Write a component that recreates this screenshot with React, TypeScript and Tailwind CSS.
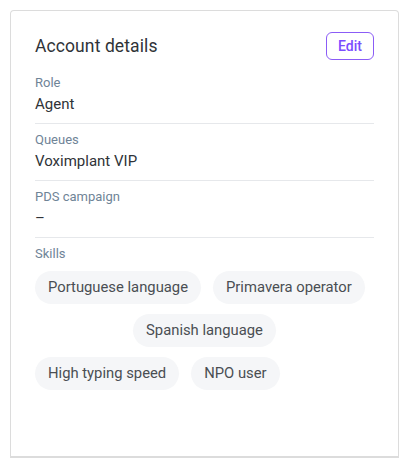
import React from 'react';

const fields = [
  { label: 'Role', value: 'Agent' },
  { label: 'Queues', value: 'Voximplant VIP' },
  { label: 'PDS campaign', value: '–' },
];

const Chip: React.FC<{ text: string }> = ({ text }) => (
  <span className="inline-flex h-[33px] items-center rounded-full bg-[#f5f6f8] px-[13px] text-[14.8px] text-[#4a4e53]">
    {text}
  </span>
);

const App: React.FC = () => {
  return (
    <div className="h-[459px] w-[409px] bg-white pl-[10px] pt-[10px]" style={{ fontFamily: 'Roboto, sans-serif' }}>
      <div className="h-[448px] w-[389px] rounded-t-[4px] border border-b-2 border-[#dcdcdc] bg-white px-6 pt-[21px]">
        <div className="flex items-center justify-between">
          <h2 className="text-[17.5px] font-normal tracking-[0.1px] text-[#2f3338]">Account details</h2>
          <button className="h-[28px] rounded-[6px] border border-[#8b5cf6] px-[11px] text-[14px] font-medium text-[#7c4dff]">
            Edit
          </button>
        </div>

        <div className="mt-[15px] flex flex-col">
          {fields.map((f) => (
            <div key={f.label} className="mb-[8px] border-b border-[#e6e8eb] pb-[9px]">
              <div className="text-[13px] leading-4 text-[#6f8497]">{f.label}</div>
              <div className="mt-[3px] text-[15px] leading-5 text-[#2f3338]">{f.value}</div>
            </div>
          ))}
          <div className="text-[13px] leading-4 text-[#6f8497]">Skills</div>
          <div className="mt-[9px] flex flex-col gap-[10px]">
            <div className="flex gap-[12px]">
              <Chip text="Portuguese language" />
              <Chip text="Primavera operator" />
            </div>
            <div className="flex justify-center">
              <Chip text="Spanish language" />
            </div>
            <div className="flex gap-[12px]">
              <Chip text="High typing speed" />
              <Chip text="NPO user" />
            </div>
          </div>
        </div>
      </div>
    </div>
  );
};

export default App;
